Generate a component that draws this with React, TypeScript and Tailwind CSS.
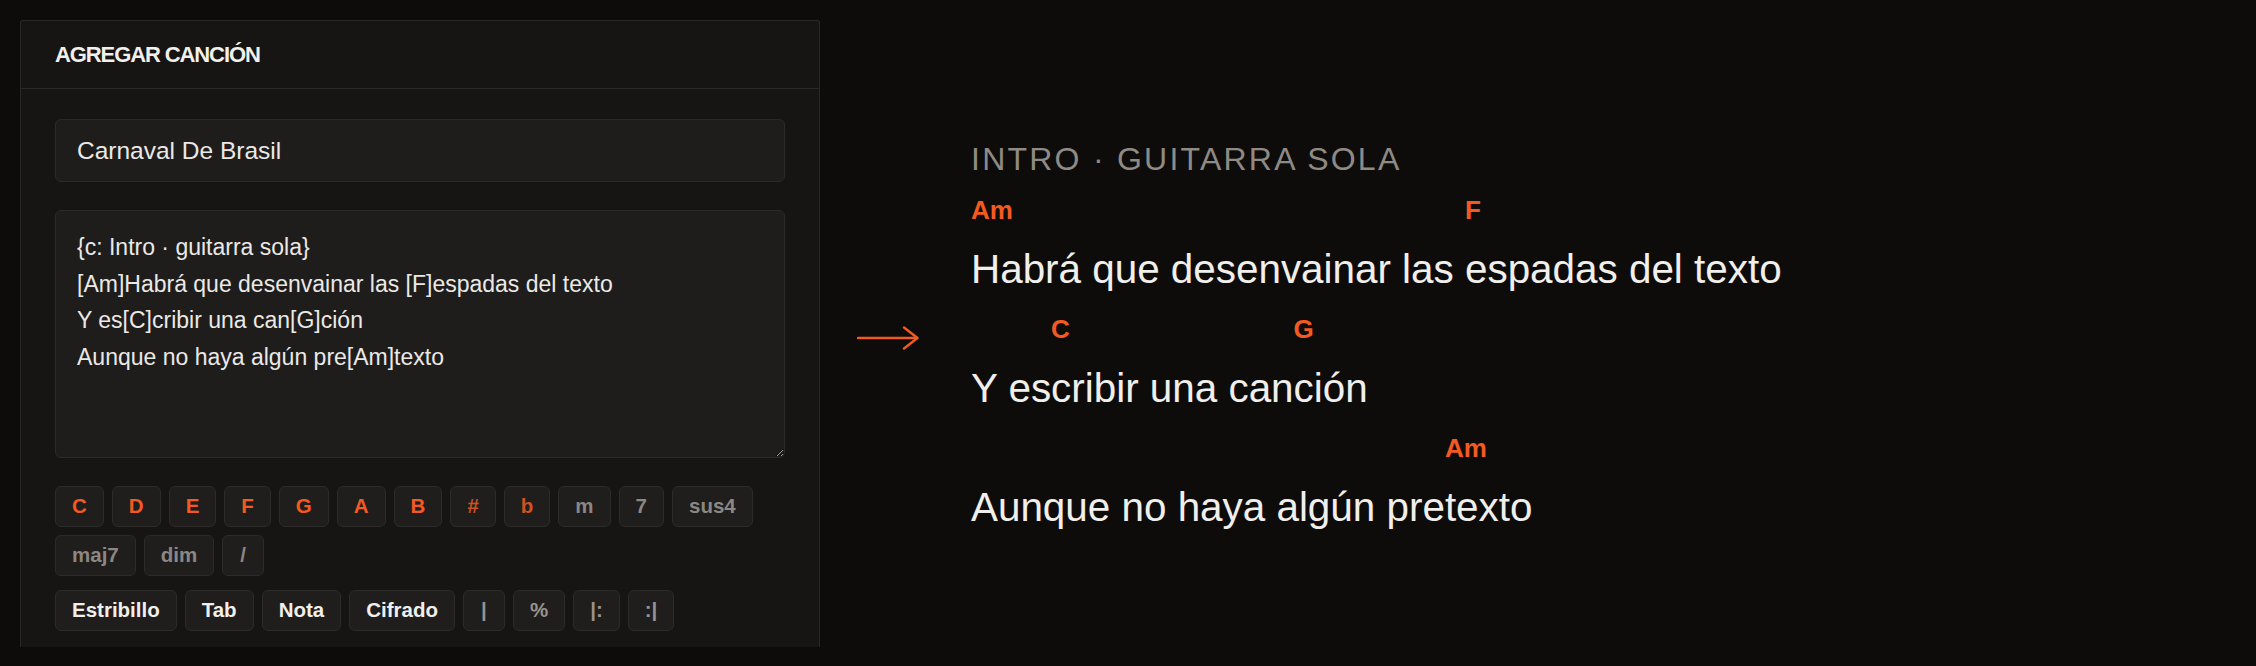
import React from 'react';

type Segment = { chord: string; text: string };

const previewLines: Segment[][] = [
    [
        { chord: 'Am', text: 'Habrá que desenvainar las ' },
        { chord: 'F', text: 'espadas del texto' },
    ],
    [
        { chord: '', text: 'Y es' },
        { chord: 'C', text: 'cribir una can' },
        { chord: 'G', text: 'ción' },
    ],
    [
        { chord: '', text: 'Aunque no haya algún pre' },
        { chord: 'Am', text: 'texto' },
    ],
];

const source = `{c: Intro · guitarra sola}
[Am]Habrá que desenvainar las [F]espadas del texto
Y es[C]cribir una can[G]ción
Aunque no haya algún pre[Am]texto`;

type Key = { label: string; tone: 'note' | 'accidental' | 'quality' | 'block' | 'symbol' };

const chordKeys: Key[] = [
    { label: 'C', tone: 'note' },
    { label: 'D', tone: 'note' },
    { label: 'E', tone: 'note' },
    { label: 'F', tone: 'note' },
    { label: 'G', tone: 'note' },
    { label: 'A', tone: 'note' },
    { label: 'B', tone: 'note' },
    { label: '#', tone: 'accidental' },
    { label: 'b', tone: 'accidental' },
    { label: 'm', tone: 'quality' },
    { label: '7', tone: 'quality' },
    { label: 'sus4', tone: 'quality' },
    { label: 'maj7', tone: 'quality' },
    { label: 'dim', tone: 'quality' },
    { label: '/', tone: 'quality' },
];

const blockKeys: Key[] = [
    { label: 'Estribillo', tone: 'block' },
    { label: 'Tab', tone: 'block' },
    { label: 'Nota', tone: 'block' },
    { label: 'Cifrado', tone: 'block' },
    { label: '|', tone: 'symbol' },
    { label: '%', tone: 'symbol' },
    { label: '|:', tone: 'symbol' },
    { label: ':|', tone: 'symbol' },
];

const toneClass: Record<Key['tone'], string> = {
    note: 'text-[#f25a22]',
    accidental: 'text-[#d0521f]',
    quality: 'text-[#8c8782]',
    block: 'text-[#f1efec]',
    symbol: 'text-[#98938d]',
};

const KeyButton: React.FC<{ k: Key }> = ({ k }) => (
    <button
        type="button"
        className={`h-[41px] min-w-[42px] px-[16px] flex items-center justify-center rounded-[6px] border border-[#2d2b29] bg-[#1f1e1d] text-[20.5px] font-bold leading-none ${toneClass[k.tone]}`}
    >
        {k.label}
    </button>
);

export default function App() {
    return (
        <div className="w-[2256px] h-[666px] overflow-hidden bg-[#0d0c0b] flex font-['Liberation_Sans',Arial,sans-serif]">
            {/* Editor panel */}
            <div className="ml-[20px] mt-[20px] w-[800px] h-[627px] shrink-0 overflow-hidden border-x border-t border-[#2a2826] bg-[#161514] rounded-t-[3px]">
                <div className="h-[68px] px-[34px] flex items-center border-b border-[#2a2826]">
                    <h2 className="text-[22px] font-bold tracking-[-1.1px] text-[#f2f0ed] uppercase">Agregar canción</h2>
                </div>

                <div className="px-[34px] pt-[30px]">
                    <input
                        defaultValue="Carnaval De Brasil"
                        className="w-full h-[63px] px-[21px] rounded-[6px] border border-[#2c2a28] bg-[#1e1d1c] text-[24.5px] text-[#ebe9e6] outline-none"
                    />

                    <textarea
                        defaultValue={source}
                        spellCheck={false}
                        className="mt-[28px] block w-full h-[248px] pt-[18px] px-[21px] rounded-[6px] border border-[#2c2a28] bg-[#1e1d1c] text-[23px] leading-[36.7px] text-[#ebe9e6] outline-none [color-scheme:dark]"
                    />

                    <div className="mt-[28px] flex flex-wrap gap-[8px]">
                        {chordKeys.map((k) => (
                            <KeyButton key={k.label} k={k} />
                        ))}
                    </div>

                    <div className="mt-[14px] flex flex-wrap gap-[8px]">
                        {blockKeys.map((k) => (
                            <KeyButton key={k.label} k={k} />
                        ))}
                    </div>
                </div>
            </div>

            {/* Arrow */}
            <div className="ml-[37px] mt-[10px] self-center shrink-0">
                <svg width="62" height="24" viewBox="0 0 62 24" fill="none" stroke="#f25a22" strokeWidth="2.4" strokeLinecap="round" strokeLinejoin="round">
                    <path d="M1 12H60" />
                    <path d="M47 1.5L60.5 12L47 22.5" />
                </svg>
            </div>

            {/* Rendered preview */}
            <div className="ml-[52px] pt-[143px] self-start">
                <div className="text-[32px] leading-[32px] tracking-[0.07em] uppercase text-[#8f8a84]">Intro · guitarra sola</div>

                {previewLines.map((line, i) => (
                    <div key={i} className={`flex ${i === 0 ? 'mt-[22px]' : 'mt-[27px]'}`}>
                        {line.map((seg, j) => (
                            <div key={j} className="flex flex-col">
                                <span className="h-[26px] text-[26px] leading-[26px] font-bold text-[#f25a22] whitespace-pre">{seg.chord}</span>
                                <span className="mt-[26px] text-[40.4px] leading-[40px] text-[#f1efeb] whitespace-pre">{seg.text}</span>
                            </div>
                        ))}
                    </div>
                ))}
            </div>
        </div>
    );
}
